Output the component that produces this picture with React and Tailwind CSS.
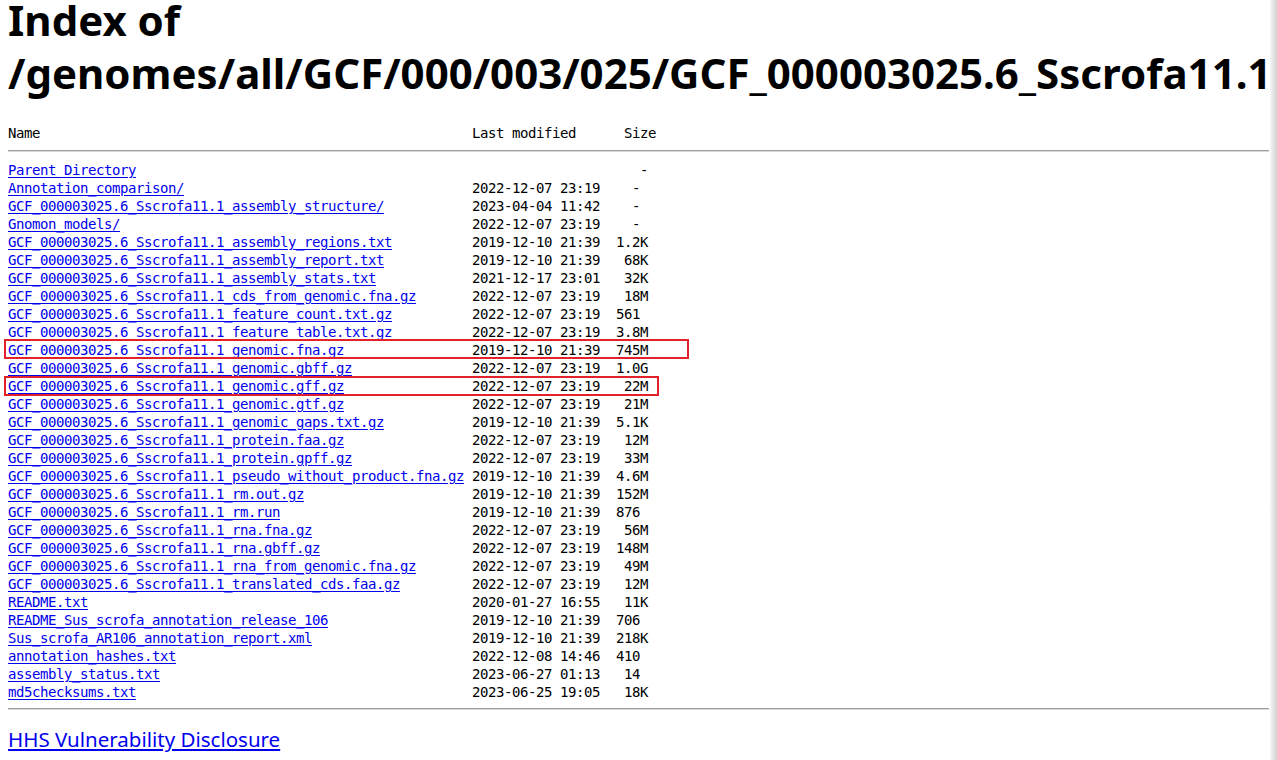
import React from "react";

const P = "GCF_000003025.6_Sscrofa11.1_";

// name, date, size (4 chars, Apache style)
const entries = [
  ["Annotation_comparison/", "2022-12-07 23:19", "  - "],
  [P + "assembly_structure/", "2023-04-04 11:42", "  - "],
  ["Gnomon_models/", "2022-12-07 23:19", "  - "],
  [P + "assembly_regions.txt", "2019-12-10 21:39", "1.2K"],
  [P + "assembly_report.txt", "2019-12-10 21:39", " 68K"],
  [P + "assembly_stats.txt", "2021-12-17 23:01", " 32K"],
  [P + "cds_from_genomic.fna.gz", "2022-12-07 23:19", " 18M"],
  [P + "feature_count.txt.gz", "2022-12-07 23:19", "561 "],
  [P + "feature_table.txt.gz", "2022-12-07 23:19", "3.8M"],
  [P + "genomic.fna.gz", "2019-12-10 21:39", "745M"],
  [P + "genomic.gbff.gz", "2022-12-07 23:19", "1.0G"],
  [P + "genomic.gff.gz", "2022-12-07 23:19", " 22M"],
  [P + "genomic.gtf.gz", "2022-12-07 23:19", " 21M"],
  [P + "genomic_gaps.txt.gz", "2019-12-10 21:39", "5.1K"],
  [P + "protein.faa.gz", "2022-12-07 23:19", " 12M"],
  [P + "protein.gpff.gz", "2022-12-07 23:19", " 33M"],
  [P + "pseudo_without_product.fna.gz", "2019-12-10 21:39", "4.6M"],
  [P + "rm.out.gz", "2019-12-10 21:39", "152M"],
  [P + "rm.run", "2019-12-10 21:39", "876 "],
  [P + "rna.fna.gz", "2022-12-07 23:19", " 56M"],
  [P + "rna.gbff.gz", "2022-12-07 23:19", "148M"],
  [P + "rna_from_genomic.fna.gz", "2022-12-07 23:19", " 49M"],
  [P + "translated_cds.faa.gz", "2022-12-07 23:19", " 12M"],
  ["README.txt", "2020-01-27 16:55", " 11K"],
  ["README_Sus_scrofa_annotation_release_106", "2019-12-10 21:39", "706 "],
  ["Sus_scrofa_AR106_annotation_report.xml", "2019-12-10 21:39", "218K"],
  ["annotation_hashes.txt", "2022-12-08 14:46", "410 "],
  ["assembly_status.txt", "2023-06-27 01:13", " 14 "],
  ["md5checksums.txt", "2023-06-25 19:05", " 18K"],
];

const NAME_COL = 58;

const Row = ({ name, date, size }) => (
  <div className="h-[18px] leading-[18px]">
    <a href="#" className="text-[#0000ee] underline underline-offset-[2px]">
      {name}
    </a>
    {" ".repeat(NAME_COL - name.length)}
    {date}
    {"  "}
    {size}
  </div>
);

export default function App() {
  return (
    <div className="relative min-h-screen w-full overflow-hidden bg-white px-2 text-black">
      {/* Title */}
      <h1
        className="whitespace-nowrap text-[42px] font-bold"
        style={{ fontFamily: '"Noto Sans", "Open Sans", sans-serif' }}
      >
        <div className="leading-[40px]">Index of</div>
        <div className="mt-[6px] leading-[53px]">/genomes/all/GCF/000/003/025/GCF_000003025.6_Sscrofa11.1</div>
      </h1>

      {/* Listing */}
      <div
        className="relative mt-[25px] whitespace-pre text-[14px] tracking-[-0.43px]"
        style={{ fontFamily: '"DejaVu Sans Mono", "Liberation Mono", monospace' }}
      >
        <div className="h-[18px] leading-[18px]">
          {"Name".padEnd(NAME_COL, " ")}
          {"Last modified      Size"}
        </div>
        <div className="mt-[8px] h-[2px] border-t border-t-[#a0a0a0] border-b border-b-[#d8d8d8]" />

        <div className="relative mt-[9px]">
          <Row name="Parent Directory" date={" ".repeat(16)} size="   -" />
          {entries.map(([name, date, size]) => (
            <Row key={name} name={name} date={date} size={size} />
          ))}

          {/* highlight boxes */}
          <div className="absolute left-[-4px] top-[178px] h-[20px] w-[685px] border-2 border-[#e3212b]" />
          <div className="absolute left-[-4px] top-[215px] h-[20px] w-[655px] border-2 border-[#e3212b]" />
        </div>

        <div className="mt-[7px] h-[2px] border-t border-t-[#a0a0a0] border-b border-b-[#d8d8d8]" />
      </div>

      <div className="mt-[15px]">
        <a
          href="#"
          className="text-[20.5px] leading-[28px] text-[#0000ee] underline"
          style={{ fontFamily: '"Noto Sans", "Open Sans", sans-serif' }}
        >
          HHS Vulnerability Disclosure
        </a>
      </div>

      {/* window edge */}
      <div className="absolute right-0 top-0 h-full w-[7px] bg-gradient-to-r from-[#f6f6f6] to-[#d2d2d2]" />
    </div>
  );
}
